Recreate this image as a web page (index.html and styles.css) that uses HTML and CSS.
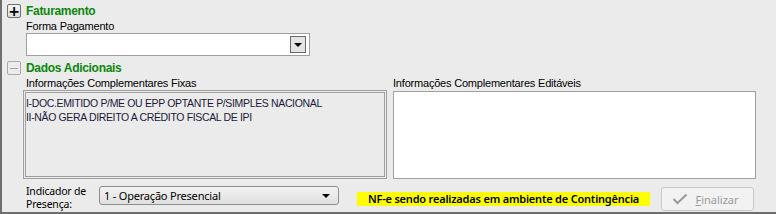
FILE: index.html
```html
<!DOCTYPE html>
<html>
<head>
  <title>Dados da Nota</title>
  <meta charset="UTF-8">
  <link rel="stylesheet" href="styles.css">
</head>
<body>
  <div class="panel">
    <div class="section-head">
      <button class="toggle">+</button>
      <span class="section-title">Faturamento</span>
    </div>
    <div class="field">
      <label class="lbl">Forma Pagamento</label>
      <div class="combo">
        <span class="combo-btn"><span class="arrow"></span></span>
      </div>
    </div>

    <div class="section-head second">
      <button class="toggle toggle-open"><span class="dash"></span></button>
      <span class="section-title">Dados Adicionais</span>
    </div>
    <div class="info-row">
      <div class="info-col">
        <label class="lbl">Informações Complementares Fixas</label>
        <div class="memo-fixed">
          <div class="memo-inner">
            I-DOC.EMITIDO P/ME OU EPP OPTANTE P/SIMPLES NACIONAL<br>
            II-NÃO GERA DIREITO A CRÉDITO FISCAL DE IPI
          </div>
        </div>
      </div>
      <div class="info-col editable">
        <label class="lbl">Informações Complementares Editáveis</label>
        <div class="memo-edit"></div>
      </div>
    </div>

    <div class="footer">
      <label class="lbl-presenca">Indicador de<br>Presença:</label>
      <div class="select">
        <span>1 - Operação Presencial</span>
        <span class="arrow"></span>
      </div>
      <div class="warning">NF-e sendo realizadas em ambiente de Contingência</div>
      <button class="btn-finalizar" disabled>
        <svg width="16" height="12" viewBox="0 0 16 12"><path d="M1.5 6 L5.5 10 L14.5 1.5" fill="none" stroke="#9a9a9a" stroke-width="2"/></svg>
        <span><u>F</u>inalizar</span>
      </button>
    </div>
  </div>
</body>
</html>
```

FILE: styles.css
```css
body {
  margin: 0;
  background-color: #ebebeb;
  font-family: "Liberation Sans", Arial, sans-serif;
  font-size: 11px;
  color: #000;
}
.panel {
  width: 772px;
  height: 212px;
  border-left: 2px solid #6e6e6e;
  border-right: 2px solid #6e6e6e;
  border-bottom: 2px solid #6e6e6e;
  background-color: #ebebeb;
  padding-left: 5px;
  box-sizing: content-box;
  display: flex;
  flex-direction: column;
}
.section-head {
  display: flex;
  align-items: center;
  margin-top: 4px;
  height: 14px;
}
.section-head.second {
  margin-top: 5px;
}
.toggle {
  width: 14px;
  height: 14px;
  padding: 0;
  margin: 0 5px 0 0;
  border: 1px solid #707070;
  border-radius: 2px;
  background: linear-gradient(#f4f4f4, #dcdcdc);
  font-family: "DejaVu Sans", sans-serif;
  font-size: 14px;
  font-weight: bold;
  line-height: 11px;
  color: #000;
  display: flex;
  align-items: center;
  justify-content: center;
}
.toggle-open {
  border-color: #a8a8a8;
  background: #ececec;
}
.dash {
  width: 8px;
  height: 1px;
  background-color: #a0a0a0;
}
.section-title {
  color: #0a870a;
  font-weight: bold;
  font-size: 12px;
  letter-spacing: -0.3px;
}
.field {
  padding-left: 19px;
  display: flex;
  flex-direction: column;
}
.lbl {
  display: block;
  height: 13px;
  line-height: 13px;
  margin-top: 2px;
  letter-spacing: -0.2px;
  color: #000;
}
.combo {
  box-sizing: border-box;
  width: 284px;
  height: 23px;
  border: 1px solid #a0a0a0;
  background-color: #fff;
  display: flex;
  justify-content: flex-end;
  align-items: center;
  padding-right: 3px;
}
.combo-btn {
  width: 14px;
  height: 15px;
  border: 1px solid #6a6a6a;
  background-color: #e4e4e4;
  display: flex;
  align-items: center;
  justify-content: center;
}
.arrow {
  width: 0;
  height: 0;
  border-left: 4px solid transparent;
  border-right: 4px solid transparent;
  border-top: 4px solid #000;
}
.info-row {
  display: flex;
  padding-left: 16px;
  gap: 6px;
}
.info-col {
  display: flex;
  flex-direction: column;
}
.info-col .lbl {
  padding-left: 3px;
}
.info-col.editable .lbl {
  padding-left: 0;
}
.memo-fixed {
  box-sizing: border-box;
  width: 364px;
  height: 89px;
  border: 1px solid #a0a0a0;
  padding: 1px;
}
.memo-inner {
  box-sizing: border-box;
  height: 100%;
  border: 1px solid #a0a0a0;
  padding: 3px 0;
  line-height: 14px;
  color: #1a1a3a;
  font-size: 10.5px;
  letter-spacing: -0.35px;
}
.memo-edit {
  box-sizing: border-box;
  margin-top: 1px;
  width: 363px;
  height: 88px;
  border: 1px solid #a0a0a0;
  background-color: #fff;
}
.footer {
  display: flex;
  align-items: flex-start;
  padding-left: 19px;
  margin-top: 7px;
  height: 24px;
}
.lbl-presenca {
  font-family: "Noto Sans", sans-serif;
  font-size: 10.5px;
  line-height: 13px;
  margin-top: -1px;
  letter-spacing: -0.2px;
  width: 73px;
  color: #000;
}
.select {
  box-sizing: border-box;
  width: 240px;
  height: 19px;
  border: 1px solid #8e8e8e;
  border-radius: 3px;
  background: linear-gradient(#f2f2f2, #e0e0e0);
  display: flex;
  align-items: center;
  justify-content: space-between;
  padding: 0 8px 0 4px;
  font-family: "Noto Sans", sans-serif;
  font-size: 11px;
  letter-spacing: -0.2px;
}
.warning {
  margin-left: 18px;
  margin-top: 6px;
  width: 293px;
  height: 14px;
  background-color: #ffff00;
  text-align: center;
  font-family: "Noto Sans", sans-serif;
  font-size: 11px;
  font-weight: 600;
  letter-spacing: -0.2px;
  line-height: 14px;
}
.btn-finalizar {
  box-sizing: border-box;
  margin-left: 11px;
  margin-top: 1px;
  width: 93px;
  height: 24px;
  border: 1px solid #c8c8c8;
  border-radius: 3px;
  background-color: #f2f2f2;
  display: flex;
  align-items: center;
  justify-content: center;
  gap: 7px;
  color: #9a9a9a;
  font-family: "Noto Sans", sans-serif;
  font-size: 11px;
  padding: 0 4px 0 0;
}
```
